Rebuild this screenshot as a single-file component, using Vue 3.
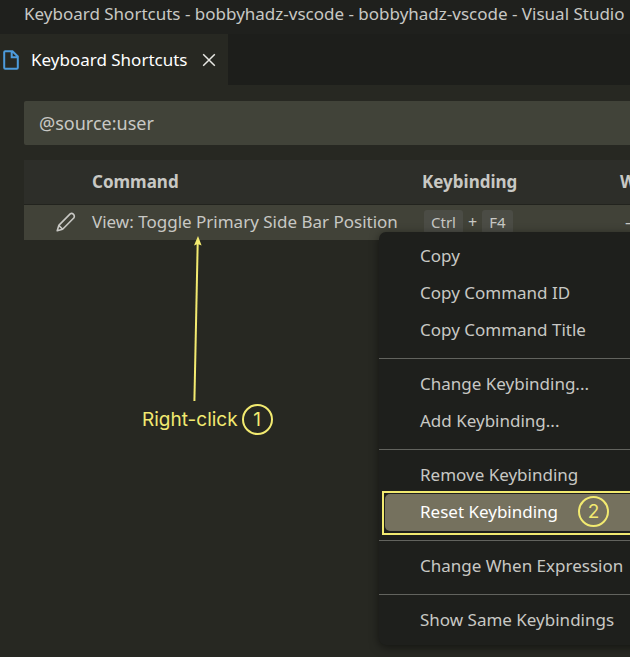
<script setup>
import { ref } from 'vue'

const query = ref('@source:user')
const shortcut = ['Ctrl', 'F4']
const groups = [
  ['Copy', 'Copy Command ID', 'Copy Command Title'],
  ['Change Keybinding...', 'Add Keybinding...'],
  ['Remove Keybinding', 'Reset Keybinding'],
  ['Change When Expression'],
  ['Show Same Keybindings'],
]
const active = 'Reset Keybinding'
</script>

<template>
  <div class="window">
    <header class="titlebar">Keyboard Shortcuts - bobbyhadz-vscode - bobbyhadz-vscode - Visual Studio</header>

    <nav class="tabs">
      <div class="tab">
        <svg class="file-icon" viewBox="0 0 16 20" aria-hidden="true">
          <path d="M2.2 1.2H9.5L14.8 6.5V17.8Q14.8 18.8 13.8 18.8H2.2Q1.2 18.8 1.2 17.8V2.2Q1.2 1.2 2.2 1.2Z M8.7 1.5V7.3H14.5" />
        </svg>
        <span>Keyboard Shortcuts</span>
        <button class="close" type="button" aria-label="Close tab">
          <svg viewBox="0 0 14 14" aria-hidden="true"><path d="M1.2 1.2 12.8 12.8M12.8 1.2 1.2 12.8" /></svg>
        </button>
      </div>
    </nav>

    <main class="editor">
      <input v-model="query" class="search" type="text" aria-label="Search keybindings" />

      <table class="bindings">
        <colgroup>
          <col class="col-edit" />
          <col class="col-command" />
          <col class="col-key" />
          <col />
        </colgroup>
        <thead>
          <tr>
            <th></th>
            <th>Command</th>
            <th>Keybinding</th>
            <th>When</th>
          </tr>
        </thead>
        <tbody>
          <tr>
            <td class="edit-cell">
              <button class="edit" type="button" aria-label="Edit keybinding">
                <svg viewBox="0 0 20 20" aria-hidden="true">
                  <path d="M1.2 18.8 2.8 13.4 14.2 1.9Q15.7.6 17.3 2.1T18 5.7L6.6 17.2ZM2.8 13.4 6.6 17.2" />
                </svg>
              </button>
            </td>
            <td>View: Toggle Primary Side Bar Position</td>
            <td>
              <span class="keys">
                <template v-for="(key, i) in shortcut" :key="key">
                  <span v-if="i">+</span>
                  <kbd>{{ key }}</kbd>
                </template>
              </span>
            </td>
            <td class="when">—</td>
          </tr>
        </tbody>
      </table>
    </main>

    <svg class="arrow" viewBox="0 0 12 168" aria-hidden="true">
      <path class="shaft" d="M2.4 166 5.7 8" />
      <path class="head" d="M6 1 9.6 10.5 5.7 9 2 10.5Z" />
    </svg>
    <div class="note">Right-click <span class="step">1</span></div>

    <div class="menu" role="menu">
      <div v-for="(group, g) in groups" :key="g" class="group">
        <button
          v-for="item in group"
          :key="item"
          type="button"
          role="menuitem"
          :class="['item', { active: item === active }]"
        >
          {{ item }}
          <span v-if="item === active" class="step">2</span>
        </button>
      </div>
    </div>
  </div>
</template>

<style>
body {
  margin: 0;
  background: #272822;
}
</style>

<style scoped>
.window {
  position: relative;
  min-height: 100vh;
  overflow: hidden;
  background: #272822;
  color: #c8c8c4;
  font-family: "Noto Sans", sans-serif;
  font-size: 17px;
  line-height: 24px;
  white-space: nowrap;
}

button {
  border: 0;
  padding: 0;
  background: none;
  color: inherit;
  font: inherit;
}

svg {
  display: block;
  fill: none;
}

.titlebar {
  box-sizing: border-box;
  height: 34px;
  padding: 2px 0 8px 24px;
  background: #1f201d;
}

.tabs {
  display: flex;
  background: #1d1e1b;
}

.tab {
  display: flex;
  align-items: center;
  box-sizing: border-box;
  height: 51px;
  padding: 0 12px 0 3px;
  background: #272822;
  color: #fff;
}

.file-icon {
  width: 16px;
  height: 20px;
  margin-right: 12px;
  stroke: #4d9bdc;
  stroke-width: 2;
}

.close {
  margin-left: 14px;
}

.close svg {
  width: 14px;
  height: 14px;
  stroke: #e8e8e4;
  stroke-width: 1.5;
}

.editor {
  padding: 16px 0 0 24px;
}

.search {
  display: block;
  box-sizing: border-box;
  width: 100%;
  height: 44px;
  padding: 0 15px;
  border: 0;
  border-radius: 2px 0 0 2px;
  background: #414339;
  color: #c8c8c4;
  font: inherit;
  font-size: 18px;
  outline: none;
}

.bindings {
  width: 100%;
  margin-top: 15px;
  table-layout: fixed;
  border-collapse: collapse;
}

.col-edit {
  width: 68px;
}

.col-command {
  width: 330px;
}

.col-key {
  width: 198px;
}

th,
td {
  padding: 0;
  text-align: left;
}

th {
  height: 44px;
  background: #2d2e29;
  border-bottom: 1px solid #22231e;
}

td {
  height: 33px;
  padding-bottom: 2px;
  background: #414238;
}

.edit {
  display: block;
  margin-left: 32px;
}

.edit svg {
  width: 20px;
  height: 20px;
  stroke: #c8c8c4;
  stroke-width: 1.6;
  stroke-linejoin: round;
}

.keys {
  display: flex;
  align-items: center;
  gap: 5px;
  padding-left: 2px;
  font-size: 16px;
}

kbd {
  padding: 0 7px;
  border-radius: 3px;
  background: #4b4c45;
  font-family: inherit;
  font-size: 15px;
}

.when {
  padding-left: 5px;
}

.arrow {
  position: absolute;
  top: 235px;
  left: 192px;
  width: 12px;
  height: 168px;
}

.shaft {
  stroke: #f2ea70;
  stroke-width: 2;
}

.head {
  fill: #f2ea70;
}

.note {
  position: absolute;
  top: 404px;
  left: 142px;
  display: flex;
  align-items: center;
  gap: 4px;
  color: #f2ea70;
  font-family: Inter, sans-serif;
  font-size: 19px;
}

.step {
  display: inline-flex;
  align-items: center;
  justify-content: center;
  box-sizing: border-box;
  width: 31px;
  height: 31px;
  border: 2px solid #f2ea70;
  border-radius: 50%;
  color: #f2ea70;
  font-family: Inter, sans-serif;
  font-size: 19px;
}

.menu {
  position: absolute;
  top: 232px;
  left: 379px;
  right: -24px;
  padding: 6px 0;
  border-radius: 7px;
  background: #1e1f1c;
  box-shadow: 0 2px 10px rgba(0, 0, 0, 0.5);
}

.group + .group {
  margin-top: 9px;
  padding-top: 7px;
  border-top: 1px solid #62635e;
}

.item {
  position: relative;
  display: flex;
  align-items: center;
  gap: 20px;
  box-sizing: border-box;
  width: calc(100% - 12px);
  height: 37px;
  margin: 0 6px;
  padding: 0 35px 2px;
  border-radius: 5px;
}

.active {
  background: #75715e;
  color: #fff;
}

.active::after {
  content: "";
  position: absolute;
  inset: -3px -3px -4px;
  border: 2px solid #f2ea70;
}
</style>
